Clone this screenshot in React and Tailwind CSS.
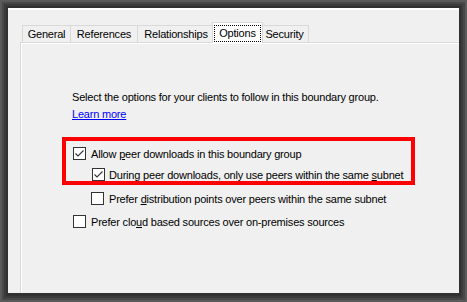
import React from "react";

function Check({ checked }) {
  return (
    <div className="w-[13px] h-[13px] shrink-0 border border-[#333333] bg-white">
      {checked && (
        <svg width="11" height="11" viewBox="0 0 11 11" className="block">
          <path d="M1.5 5.5 L4 8 L9.5 2.5" fill="none" stroke="#333333" strokeWidth="1.1" />
        </svg>
      )}
    </div>
  );
}

function Tab({ label, w, ml, selected, z }) {
  if (selected) {
    return (
      <div
        className={`relative z-20 h-[21px] mb-[-1px] bg-white border border-b-0 border-[#d9d9d9] flex justify-center pt-[1px] ${w} ${ml}`}
      >
        <div className="mt-[1px] h-[17px] w-[47px] border border-dotted border-black flex justify-center items-start">
          <span className="leading-[14px]">{label}</span>
        </div>
      </div>
    );
  }
  return (
    <div
      className={`relative h-[17px] bg-[#f0f0f0] border border-b-0 border-[#d9d9d9] flex justify-center ${w} ${ml} ${z}`}
    >
      <span className="leading-[16px]">{label}</span>
    </div>
  );
}

export default function App() {
  return (
    <div
      className="w-[467px] h-[302px] bg-[#5a5a5a] p-[2px] text-black text-[11px] tracking-[-0.2px]"
      style={{ fontFamily: '"Segoe UI", "Liberation Sans", Arial, sans-serif' }}
    >
      <div className="h-full bg-[#484848] p-[2px]">
        <div className="h-full bg-[#3b3b3b] p-[2px]">
          <div className="h-full bg-[#313131] p-[2px] pb-[3px]">
            <div className="h-full bg-[#f0f0f0] border-t-2 border-white flex flex-col overflow-hidden pl-[12px] pt-[12px]">
              <div className="flex items-end h-[20px] pl-[2px]">
                <Tab label="General" w="w-[49px]" ml="" z="z-10" />
                <Tab label="References" w="w-[68px]" ml="-ml-[1px]" z="z-10" />
                <Tab label="Relationships" w="w-[78px]" ml="-ml-[1px]" z="z-10" />
                <Tab label="Options" w="w-[51px]" ml="-ml-[3px]" selected />
                <Tab label="Security" w="w-[49px]" ml="-ml-[3px]" z="z-0" />
              </div>
              <div className="flex-1 border-t border-l border-[#d9d9d9]">
                <div className="h-full border-t border-l border-white pl-[50px] pt-[45px] flex flex-col items-start">
                  <p className="leading-[16px]">
                    Select the options for your clients to follow in this boundary group.
                  </p>
                  <a className="block leading-[16px] mt-[1px] underline text-[#0000ff]">Learn more</a>
                  <div className="mt-[15px] -ml-[10px] w-[353px] border-4 border-[#ff0000] pt-[6px] pl-[7px] flex flex-col">
                    <div className="h-[13px] flex items-center gap-[5px]">
                      <Check checked />
                      <span className="leading-[16px]">
                        Allow <u>p</u>eer downloads in this boundary group
                      </span>
                    </div>
                    <div className="h-[13px] mt-[8px] ml-[19px] flex items-center gap-[4px]">
                      <Check checked />
                      <span className="leading-[16px]">
                        During peer downloads, only use peers within the same <u>s</u>ubnet
                      </span>
                    </div>
                  </div>
                  <div className="h-[13px] mt-[7px] ml-[19px] flex items-center gap-[5px]">
                    <Check />
                    <span className="leading-[16px]">
                      Prefer <u>d</u>istribution points over peers within the same subnet
                    </span>
                  </div>
                  <div className="h-[13px] mt-[10px] ml-[1px] flex items-center gap-[5px]">
                    <Check />
                    <span className="leading-[16px]">
                      Prefer clo<u>u</u>d based sources over on-premises sources
                    </span>
                  </div>
                </div>
              </div>
            </div>
          </div>
        </div>
      </div>
    </div>
  );
}
